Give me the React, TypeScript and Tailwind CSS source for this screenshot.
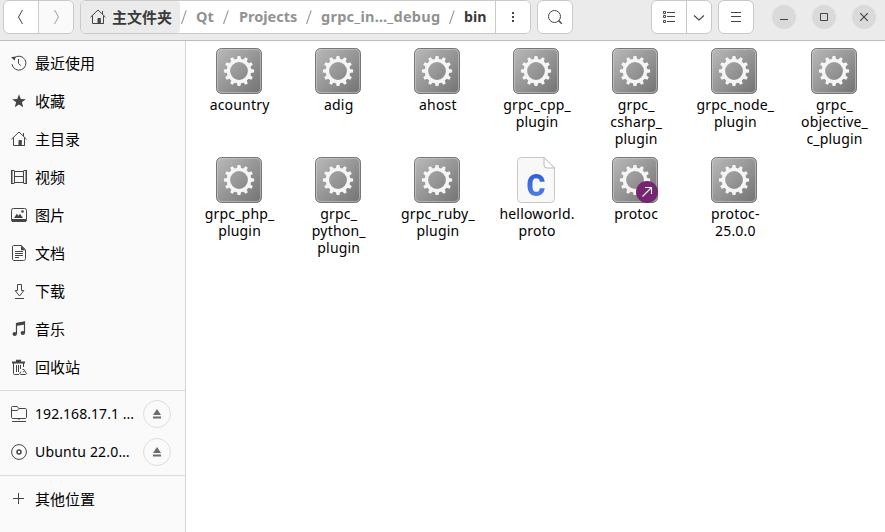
import React from "react";

type IconProps = { children: React.ReactNode; className?: string };

function Icon({ children, className = "" }: IconProps) {
  return (
    <svg
      viewBox="0 0 16 16"
      fill="none"
      stroke="currentColor"
      strokeWidth="1"
      className={`size-4 shrink-0 text-[#454545] ${className}`}
    >
      {children}
    </svg>
  );
}

const HomeIcon = () => (
  <Icon>
    <path d="M.5 8.2 8 1l7.500 7.200M2.500 6.800v7.700H8V9.500M10.800 14.500h2.700V6.800M7.500 14.500h6M12.500 2v3" />
    <path d="M8 9h2.800v6H8z" fill="currentColor" stroke="none" />
  </Icon>
);

const RecentIcon = () => (
  <Icon>
    <path d="M1 9.200A7 7 0 1 0 3.200 3" />
    <path d="M0 2.200 4.600 1.600 3.600 5.600z" fill="currentColor" stroke="none" />
    <path d="M7.500 4v4.400l2.300 2.300" />
  </Icon>
);

const StarIcon = () => (
  <Icon>
    <path d="m8 1.200 1.800 4.700 5 .3-3.900 3.100 1.300 4.900L8 11.500l-4.200 2.700 1.300-4.900-3.900-3.100 5-.3z" fill="currentColor" stroke="none" />
  </Icon>
);

const VideoIcon = () => (
  <Icon>
    <path d="M3.500 1.500v13M12.500 1.500v13M3.500 2.500h9M3.500 7.500h9M3.500 13.500h9" />
    <path d="M1.500 1.500v13M14.500 1.500v13" strokeDasharray="1 1" />
    <path d="M1 1.500h2M1 14.500h2M13 1.500h2M13 14.500h2M.5 1v14M15.500 1v14" />
  </Icon>
);

const PictureIcon = () => (
  <Icon>
    <rect x=".5" y="1.500" width="15" height="13" rx="1.800" />
    <path d="M.5 12h15v1.200c0 1-.6 1.800-1.800 1.800H2.300C1.100 15 .5 14.200.5 13.200zM3 11l2.800-4.200 1.700 2L9 6.800l3 4.200z" fill="currentColor" stroke="none" />
    <circle cx="11.500" cy="4.500" r="1.300" fill="currentColor" stroke="none" />
  </Icon>
);

const DocIcon = () => (
  <Icon>
    <path d="M3 .5h7.300l4.200 4.200V13.500c0 1.300-.7 2-2 2H3c-1 0-1.500-.6-1.500-1.600V2C1.500 1 2 .5 3 .5z" />
    <path d="M10 .5v4.700h4.500z" fill="currentColor" stroke="none" />
    <path d="M4 6.500h8M4 8.500h8M4 10.500h8M4 12.500h4" />
  </Icon>
);

const DownloadIcon = () => (
  <Icon>
    <path d="M6.500 1.500h4v6h2.300L8.500 13 4.200 7.500h2.300zM4 15.500h9" />
  </Icon>
);

const MusicIcon = () => (
  <Icon>
    <path d="M5.500 13V2.500l8-1.500v11" strokeWidth="1.200" />
    <path d="M5 2.200 14 .5v3L5 5z" fill="currentColor" stroke="none" />
    <ellipse cx="3.700" cy="13" rx="2.200" ry="1.900" fill="currentColor" stroke="none" />
    <ellipse cx="11.800" cy="12" rx="2.200" ry="1.900" fill="currentColor" stroke="none" />
  </Icon>
);

const TrashIcon = () => (
  <Icon>
    <path d="M2.500 3.500v11c0 .6.400 1 1 1H8M12.500 3.500V8M5.500 6v7M7.500 6v7M9.500 6v4" />
    <path d="M1 2.500h13v2H1zM5 .8h5v2H5z" fill="currentColor" stroke="none" />
    <path d="M11.500 10.500h1.800M9.800 12.500 9 14.200c-.3.700 0 1.300.8 1.300h4.500c1 0 1.300-.7.900-1.300l-1.700-2.700-1.300 1.800" />
  </Icon>
);

const NetworkFolderIcon = () => (
  <Icon>
    <path d="M.5 11V1.500c0-.6.400-1 1-1h4.700c.8 0 .8 2 1.800 2h6.500c.6 0 1 .4 1 1V11c0 .9-.5 1.500-1.500 1.500H2C1 12.500.5 12 .5 11zM.5 4.500h5.700c.8 0 1.100-2 2.300-2M1 15.500h14M8 12.500v1.500" />
  </Icon>
);

const DiscIcon = () => (
  <Icon>
    <circle cx="8" cy="8" r="7.400" />
    <circle cx="8" cy="8" r="2" strokeWidth="1.500" />
  </Icon>
);

const PlusIcon = () => (
  <Icon>
    <path d="M2 7.500h11M7.500 2v11" />
  </Icon>
);

const places = [
  { label: "最近使用", icon: RecentIcon },
  { label: "收藏", icon: StarIcon },
  { label: "主目录", icon: HomeIcon },
  { label: "视频", icon: VideoIcon },
  { label: "图片", icon: PictureIcon },
  { label: "文档", icon: DocIcon },
  { label: "下载", icon: DownloadIcon },
  { label: "音乐", icon: MusicIcon },
  { label: "回收站", icon: TrashIcon },
];

const mounts = [
  { label: "192.168.17.1 ...", icon: NetworkFolderIcon, track: "tracking-[0.06px]" },
  { label: "Ubuntu 22.0…", icon: DiscIcon, track: "tracking-[0.2px]" },
];

type FileItem = { name: string; kind?: "c" | "link" };

const files: FileItem[] = [
  { name: "acountry" },
  { name: "adig" },
  { name: "ahost" },
  { name: "grpc_cpp_\nplugin" },
  { name: "grpc_\ncsharp_\nplugin" },
  { name: "grpc_node_\nplugin" },
  { name: "grpc_\nobjective_\nc_plugin" },
  { name: "grpc_php_\nplugin" },
  { name: "grpc_\npython_\nplugin" },
  { name: "grpc_ruby_\nplugin" },
  { name: "helloworld.\nproto", kind: "c" },
  { name: "protoc", kind: "link" },
  { name: "protoc-\n25.0.0" },
];

const teeth = Array.from({ length: 12 }, (_, i) => i * 30);

function GearIcon({ link }: { link?: boolean }) {
  return (
    <svg viewBox="0 0 46 46" className="block h-[46px] w-[46px]">
      <defs>
        <linearGradient id="plate" x1="0" y1="0" x2="1" y2="1">
          <stop offset="0" stopColor="#bababa" />
          <stop offset="1" stopColor="#727272" />
        </linearGradient>
      </defs>
      <rect x=".5" y=".5" width="45" height="45" rx="5" fill="url(#plate)" stroke="#777" />
      <rect x="1.500" y="1.500" width="43" height="43" rx="4" fill="none" stroke="#d0d0d0" strokeOpacity=".55" />
      <circle cx="23" cy="23" r="10.600" fill="none" stroke="#f6f5f3" strokeWidth="3.400" />
      {teeth.map((a) => (
        <path key={a} d="m20.900 11.500.700-3.600h2.800l.7 3.600z" fill="#f6f5f3" transform={`rotate(${a} 23 23)`} />
      ))}
      {link && (
        <g>
          <circle cx="35" cy="35" r="11" fill="#772572" />
          <path d="m30.500 39.500 9-9M33 30.500h6.500V37" fill="none" stroke="#fff" strokeWidth="1.100" />
        </g>
      )}
    </svg>
  );
}

function CFileIcon() {
  return (
    <div className="relative h-[46px] w-[38px]">
      <svg viewBox="0 0 38 46" className="block h-[46px] w-[38px]">
        <path d="M4.500.5H27l10.500 10.500v30.500a4 4 0 0 1-4 4h-29a4 4 0 0 1-4-4v-37a4 4 0 0 1 4-4z" fill="#f8f8f8" stroke="#c8c8c8" />
        <path d="M27 .5 37.500 11H30a3 3 0 0 1-3-3z" fill="#fdfdfd" stroke="#bbb" />
      </svg>
      <span className="absolute inset-x-0 top-[9px] scale-x-90 bg-gradient-to-b from-[#2453d4] to-[#5c86ee] bg-clip-text text-center font-['Roboto'] text-[32px] leading-[38px] font-black text-transparent">
        C
      </span>
    </div>
  );
}

function Eject() {
  return (
    <button className="flex size-7 shrink-0 items-center justify-center rounded-full border border-[#dedede]">
      <svg viewBox="0 0 10 10" className="size-2.5 text-[#6b6b6b]" fill="currentColor">
        <path d="M5 0 9 6H1zM1 7.500h8v2H1z" />
      </svg>
    </button>
  );
}

const box = "flex h-[34px] shrink-0 overflow-hidden rounded-[6px] border border-[#c9c9c9] bg-white";
const cell = "flex flex-1 items-center justify-center";

function Slash() {
  return (
    <svg viewBox="0 0 8 16" className="h-4 w-2 shrink-0 text-[#a0a0a0]" fill="none" stroke="currentColor" strokeWidth="1.200">
      <path d="M6.200 1.500 1.500 15" />
    </svg>
  );
}

function Header() {
  return (
    <header className="flex h-[41px] shrink-0 border-b border-[#bdbdbd] bg-[#ebebeb] pl-[3px]">
      <div className={`${box} w-[71px]`}>
        <div className={`${cell} border-r border-[#c9c9c9]`}>
          <Icon><path d="M9.500 1 5.500 8l4 7" /></Icon>
        </div>
        <div className={`${cell} bg-[#fafafa]`}>
          <Icon className="opacity-50"><path d="m6.500 1 4 7-4 7" /></Icon>
        </div>
      </div>

      <nav className={`${box} ml-1.5 w-[451px] bg-[#fafafa] text-[14.500px] font-bold text-[#929292]`}>
        <div className="flex w-[99px] shrink-0 items-center rounded-[4px] bg-[#ebebeb] pl-[9px] text-[#3a3a3a]">
          <HomeIcon />
          <span className="ml-1.5 text-[15px] leading-5">主文件夹</span>
        </div>
        <div className="flex min-w-0 flex-1 items-center whitespace-nowrap">
          <Slash />
          <span className="ml-2 w-[26px]">Qt</span>
          <Slash />
          <span className="ml-[9px] w-[66px]">Projects</span>
          <Slash />
          <span className="ml-2 w-[127px] tracking-[0.24px]">grpc_in…_debug</span>
          <Slash />
          <span className="ml-2 text-[14.200px] text-[#3a3a3a]">bin</span>
        </div>
        <div className="flex w-[35px] shrink-0 items-center justify-center border-l border-[#c9c9c9] bg-white">
          <Icon><path d="M7 3h2v2H7zM7 7h2v2H7zM7 11h2v2H7z" fill="currentColor" stroke="none" /></Icon>
        </div>
      </nav>

      <div className={`${box} ml-1.5 w-9`}>
        <div className={cell}>
          <Icon><circle cx="7.500" cy="7.500" r="6" /><path d="m11.500 11.500 3.300 3.300" strokeWidth="1.400" /></Icon>
        </div>
      </div>

      <div className={`${box} ml-[78px] w-[61px]`}>
        <div className={`${cell} border-r border-[#c9c9c9]`}>
          <Icon><path d="M6 3.500h8M6 7.500h8M6 12.500h8M2.500 2.500h2v2h-2zM2.500 6.500h2v2h-2zM2.500 11.500h2v2h-2z" /></Icon>
        </div>
        <div className="flex w-6 items-center justify-center">
          <svg viewBox="0 0 12 12" fill="none" stroke="currentColor" strokeWidth="1.100" className="size-3 text-[#454545]">
            <path d="m1 4.500 5 4.500 5-4.500" />
          </svg>
        </div>
      </div>

      <div className={`${box} ml-1.5 w-9`}>
        <div className={cell}>
          <Icon><path d="M3 3.500h10M3 7.500h10M3 12.500h10" /></Icon>
        </div>
      </div>

      <div className="mt-[5px] ml-[18px] flex h-6 gap-4">
        <div className="flex size-6 items-center justify-center rounded-full bg-[#dadada]">
          <Icon className="text-[#303030]"><path d="M4 10.500h8" /></Icon>
        </div>
        <div className="flex size-6 items-center justify-center rounded-full bg-[#dadada]">
          <Icon className="text-[#303030]"><path d="M4.500 4.500h7v7h-7z" /></Icon>
        </div>
        <div className="flex size-6 items-center justify-center rounded-full bg-[#dadada]">
          <Icon className="text-[#303030]"><path d="m4.200 4.200 7.600 7.600m0-7.600-7.600 7.600" strokeWidth="1.200" /></Icon>
        </div>
      </div>
    </header>
  );
}

function Sidebar() {
  return (
    <aside className="flex w-[186px] shrink-0 flex-col border-r border-[#d5d5d5] bg-[#fafafa] text-[15px] leading-5 text-black">
      <ul className="pt-[3px] pb-1">
        {places.map(({ label, icon: PlaceIcon }) => (
          <li key={label} className="flex h-[38px] items-center gap-2 pl-[11px]">
            <PlaceIcon />
            <span>{label}</span>
          </li>
        ))}
      </ul>
      <ul className="border-t border-[#dcdcdc] pt-1 pb-1">
        {mounts.map(({ label, icon: MountIcon, track }) => (
          <li key={label} className="flex h-[38px] items-center gap-2 pr-3.5 pl-[11px]">
            <MountIcon />
            <span className={`flex-1 text-[14px] whitespace-nowrap ${track}`}>{label}</span>
            <Eject />
          </li>
        ))}
      </ul>
      <div className="flex h-[43px] items-center gap-2 border-t border-[#dcdcdc] pt-1 pl-[11px]">
        <PlusIcon />
        <span>其他位置</span>
      </div>
    </aside>
  );
}

export default function App() {
  return (
    <div className="flex h-[532px] w-[885px] flex-col overflow-hidden bg-white font-['Noto_Sans','Noto_Sans_CJK_SC',sans-serif]">
      <Header />
      <div className="flex min-h-0 flex-1">
        <Sidebar />
        <main className="min-w-0 flex-1 pt-[7px] pl-[3px]">
          <div className="grid auto-rows-[109px] grid-cols-[repeat(7,99.160px)]">
            {files.map((file) => (
              <figure key={file.name} className="flex flex-col items-center">
                {file.kind === "c" ? <CFileIcon /> : <GearIcon link={file.kind === "link"} />}
                <figcaption className="mt-0.5 pl-0.5 text-center text-[14px] leading-[17px] tracking-[0.18px] whitespace-pre text-black">
                  {file.name}
                </figcaption>
              </figure>
            ))}
          </div>
        </main>
      </div>
    </div>
  );
}
